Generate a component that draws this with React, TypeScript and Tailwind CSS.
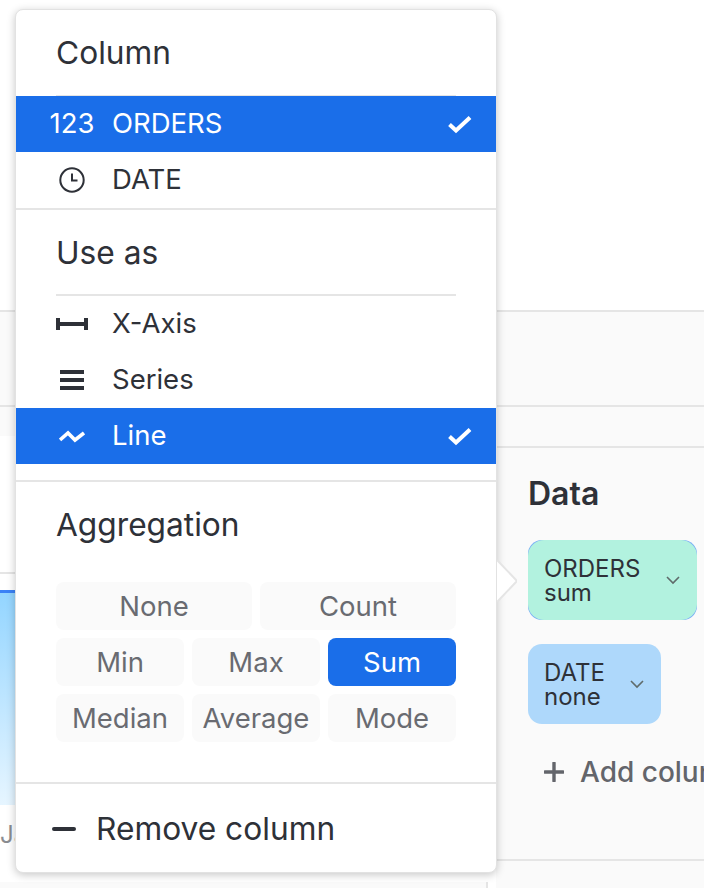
import React from "react";

const font = { fontFamily: "Inter, sans-serif" };

function Check() {
  return (
    <svg width="26" height="20" viewBox="0 0 26 20" className="shrink-0">
      <path d="M2.5 10.5 L9 16.5 L23 3.5" fill="none" stroke="white" strokeWidth="4" />
    </svg>
  );
}

function Row({ icon, label, active }: { icon: React.ReactNode; label: string; active?: boolean }) {
  return (
    <div className={`flex h-14 items-center ${active ? "bg-[#1a6ee9] text-white" : "text-[#2e3138]"}`}>
      <div className="flex w-[96px] shrink-0 items-center justify-center pl-[16px]">{icon}</div>
      <span className="text-[27.5px] leading-none">{label}</span>
      {active && <span className="ml-auto mr-[23px] flex"><Check /></span>}
    </div>
  );
}

function Agg({ label, active }: { label: string; active?: boolean }) {
  return (
    <div className={`flex h-12 items-center justify-center rounded-lg pt-[1px] text-[27.5px] ${active ? "bg-[#1a6ee9] text-white" : "bg-[#fafafa] text-[#696b71]"}`}>
      {label}
    </div>
  );
}

function Chevron() {
  return (
    <svg width="14" height="9" viewBox="0 0 14 9" className="shrink-0">
      <path d="M1 1 L7 7 L13 1" fill="none" stroke="#5f6b6a" strokeWidth="1.6" />
    </svg>
  );
}

function ChipBody({ name, sub, cls }: { name: string; sub: string; cls: string }) {
  return (
    <div className={`flex h-20 items-center pl-[16px] pr-[17px] ${cls}`}>
      <div className="flex-1 text-[#2e3138]">
        <div className="text-[24px] leading-[25px]">{name}</div>
        <div className="text-[24px] leading-[24px]">{sub}</div>
      </div>
      <Chevron />
    </div>
  );
}

export default function App() {
  return (
    <div style={font} className="relative flex h-[888px] w-[704px] flex-col overflow-hidden bg-white">
      <div className="h-[310px] shrink-0 bg-white" />
      <div className="h-[95px] shrink-0 border-t-2 border-[#e5e5e5] bg-[#fafafa]" />
      <div className="flex flex-1">
        <div className="flex w-[496px] shrink-0 flex-col border-t-2 border-[#e5e5e5]">
          <div className="h-[29px] shrink-0 bg-[#fafafa]" />
          <div className="h-[136px] shrink-0 bg-white" />
          <div className="h-[18px] shrink-0 border-t-2 border-[#e5e5e5] bg-white" />
          <div className="h-[215px] shrink-0 border-t-[3px] border-[#3b82f6] bg-gradient-to-b from-[#93d5ff] to-[#e6f5ff]" />
          <div className="pt-[18px] text-[24px] leading-none text-[#8a8c91]">Jan</div>
          <div className="mt-auto h-[6px] w-[488px] border-r-2 border-[#e5e5e5] bg-[#fafafa]" />
        </div>
        <div className="flex flex-1 flex-col">
          <div className="h-[41px] shrink-0 border-t-2 border-[#e5e5e5] bg-[#fafafa]" />
          <div className="flex h-[415px] shrink-0 flex-col border-y-2 border-[#e5e5e5] bg-[#fafafa] pl-[32px]">
            <div className="mt-[28px] text-[32px] font-semibold leading-[36px] text-[#2e3138]">Data</div>
            <div className="mt-[28px] flex flex-col gap-6">
              <div className="w-[169px] overflow-hidden rounded-[14px] bg-[#7ab0f5]">
                <ChipBody name="ORDERS" sub="sum" cls="rounded-[16px] bg-[#b2f2df]" />
              </div>
              <div className="flex items-center justify-between">
                <div className="w-[133px]">
                  <ChipBody name="DATE" sub="none" cls="rounded-[14px] bg-[#aed8fb]" />
                </div>
                <div className="h-0.5 w-[4px] bg-[#dddddd]" />
              </div>
            </div>
            <div className="mt-[34px] flex items-center gap-[16px] pl-[16px] text-[#63656b]">
              <svg width="20" height="20" viewBox="0 0 20 20" className="shrink-0">
                <path d="M10 1 V19 M1 10 H19" stroke="#63656b" strokeWidth="3.4" strokeLinecap="round" />
              </svg>
              <span className="whitespace-nowrap text-[28px] font-medium leading-none">Add column</span>
            </div>
          </div>
          <div className="flex-1 bg-[#fafafa]" />
        </div>
      </div>

      <div className="absolute left-[15px] top-[9px] flex h-[864px] w-[482px] flex-col rounded-lg border border-[#e2e2e2] bg-white shadow-[0_2px_8px_rgba(0,0,0,0.22)]">
        <div className="flex h-[85px] shrink-0 items-start pl-[40px] pt-[27px] text-[31.7px] leading-none text-[#2e3138]">Column</div>
        <div className="mx-10 -mb-px h-0.5 shrink-0 bg-[#e5e5e5]" />
        <Row active label="ORDERS" icon={<span className="text-[27.5px] leading-none text-white">123</span>} />
        <Row
          label="DATE"
          icon={
            <svg width="26" height="26" viewBox="0 0 26 26">
              <circle cx="13" cy="13" r="11.7" fill="none" stroke="#2e3138" strokeWidth="2" />
              <path d="M13 6.5 V13.5 H18.5" fill="none" stroke="#2e3138" strokeWidth="2" />
            </svg>
          }
        />
        <div className="h-0.5 shrink-0 bg-[#e5e5e5]" />
        <div className="flex h-[84px] shrink-0 items-start pl-[40px] pt-[27px] text-[31.7px] leading-none text-[#2e3138]">Use as</div>
        <div className="mx-10 h-0.5 shrink-0 bg-[#e5e5e5]" />
        <Row
          label="X-Axis"
          icon={
            <svg width="32" height="12" viewBox="0 0 32 12">
              <path d="M0 0 H4 V4 H28 V0 H32 V12 H28 V8 H4 V12 H0 Z" fill="#2e3138" />
            </svg>
          }
        />
        <Row
          label="Series"
          icon={
            <svg width="24" height="20" viewBox="0 0 24 20">
              <path d="M0 0 H24 V4 H0 Z M0 8 H24 V12 H0 Z M0 16 H24 V20 H0 Z" fill="#2e3138" />
            </svg>
          }
        />
        <Row
          active
          label="Line"
          icon={
            <svg width="26" height="14" viewBox="0 0 26 14">
              <path d="M1 11 L9 4 L16 11 L25 4" fill="none" stroke="white" strokeWidth="3.6" />
            </svg>
          }
        />
        <div className="h-4 shrink-0" />
        <div className="h-0.5 shrink-0 bg-[#e5e5e5]" />
        <div className="flex h-[100px] shrink-0 items-start pl-[40px] pt-[27px] text-[31.7px] leading-none text-[#2e3138]">Aggregation</div>
        <div className="mx-10 flex flex-col gap-2">
          <div className="grid grid-cols-2 gap-2">
            <Agg label="None" />
            <Agg label="Count" />
          </div>
          <div className="grid grid-cols-3 gap-2">
            <Agg label="Min" />
            <Agg label="Max" />
            <Agg active label="Sum" />
          </div>
          <div className="grid grid-cols-3 gap-2">
            <Agg label="Median" />
            <Agg label="Average" />
            <Agg label="Mode" />
          </div>
        </div>
        <div className="h-10 shrink-0" />
        <div className="h-0.5 shrink-0 bg-[#e5e5e5]" />
        <div className="flex flex-1 items-center pl-[36px] pt-[2px] text-[31.7px] leading-none text-[#2e3138]">
          <svg width="24" height="4" viewBox="0 0 24 4" className="mr-[20px] shrink-0">
            <rect width="24" height="4" rx="2" fill="#2e3138" />
          </svg>
          Remove column
        </div>
        <svg width="20" height="44" viewBox="0 0 20 44" className="absolute left-[481px] top-[549px]">
          <path d="M0 1 L20 22 L0 43" fill="#ffffff" stroke="#e5e5e5" strokeWidth="2" />
        </svg>
      </div>
    </div>
  );
}
